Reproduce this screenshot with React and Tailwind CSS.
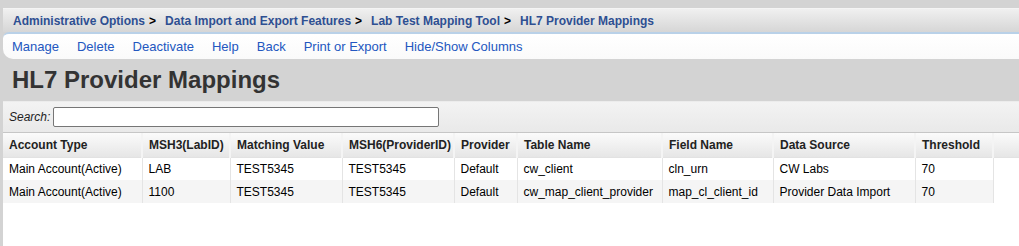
import React from 'react';

const crumbs = [
    'Administrative Options',
    'Data Import and Export Features',
    'Lab Test Mapping Tool',
    'HL7 Provider Mappings',
];

const menu = ['Manage', 'Delete', 'Deactivate', 'Help', 'Back', 'Print or Export', 'Hide/Show Columns'];

const columns = [
    { label: 'Account Type', width: 'w-[139px]' },
    { label: 'MSH3(LabID)', width: 'w-[88px]' },
    { label: 'Matching Value', width: 'w-[112px]' },
    { label: 'MSH6(ProviderID)', width: 'w-[112px]' },
    { label: 'Provider', width: 'w-[63px]' },
    { label: 'Table Name', width: 'w-[145px]' },
    { label: 'Field Name', width: 'w-[111px]' },
    { label: 'Data Source', width: 'w-[142px]' },
    { label: 'Threshold', width: 'w-[78px]' },
];

const rows = [
    ['Main Account(Active)', 'LAB', 'TEST5345', 'TEST5345', 'Default', 'cw_client', 'cln_urn', 'CW Labs', '70'],
    ['Main Account(Active)', '1100', 'TEST5345', 'TEST5345', 'Default', 'cw_map_client_provider', 'map_cl_client_id', 'Provider Data Import', '70'],
];

const App = () => {
    return (
        <div className="min-h-[246px] bg-[#d3d3d3] pl-[3px] pt-[8px] font-['Liberation_Sans',Arial,sans-serif]">
            {/* breadcrumb */}
            <div className="flex h-[24px] items-center border-t border-[#f4f4f4] bg-gradient-to-b from-[#f0f0f0] to-[#d6d6d6] pl-[10px] text-[12px] font-bold text-[#2e4f92]">
                {crumbs.map((c, i) => (
                    <span key={c} className="flex items-center">
                        <span>{c}</span>
                        {i < crumbs.length - 1 && <span className="ml-[4px] mr-[9px] text-black">&gt;</span>}
                    </span>
                ))}
            </div>

            {/* action menu */}
            <div className="flex h-[27px] items-center gap-[18px] rounded-bl-[10px] rounded-tl-[6px] border-t-2 border-[#b9d1e8] bg-gradient-to-b from-white to-[#fafafa] pl-[9px] text-[13px] text-[#2357c0]">
                {menu.map((m) => (
                    <span key={m} className="cursor-pointer">{m}</span>
                ))}
            </div>

            <h1 className="pl-[9px] text-[24px] font-bold leading-[42px] text-[#333333]">HL7 Provider Mappings</h1>

            {/* search panel */}
            <div className="flex h-[32px] items-center border-t border-[#ececec] border-b border-b-[#c6c6c6] bg-gradient-to-b from-[#f3f3f3] to-[#e9e9e9] pl-[6px]">
                <span className="text-[12px] italic text-[#222]">Search:</span>
                <input className="ml-[3px] h-[20px] w-[386px] rounded-[2px] border border-[#767676] bg-white" />
            </div>

            {/* table */}
            <div className="min-h-[113px] bg-white">
                <table className="w-full table-fixed border-collapse text-[12px]">
                    <colgroup>
                        {columns.map((c) => (
                            <col key={c.label} className={c.width} />
                        ))}
                        <col />
                    </colgroup>
                    <thead>
                        <tr className="h-[24px]">
                            {columns.map((c, i) => (
                                <th
                                    key={c.label}
                                    className={
                                        'bg-gradient-to-b from-[#fbfbfb] to-[#e6e6e6] pl-[6px] text-left font-bold text-[#222] whitespace-nowrap border-b border-[#e2e2e2] ' +
                                        (i > 0 ? 'border-l-2 border-l-[#f4f4f4]' : '')
                                    }
                                >
                                    {c.label}
                                </th>
                            ))}
                            <th className="border-b border-l-2 border-[#e2e2e2] border-l-[#f4f4f4] bg-gradient-to-b from-[#fbfbfb] to-[#e6e6e6]"></th>
                        </tr>
                    </thead>
                    <tbody>
                        {rows.map((r, ri) => (
                            <tr key={ri} className="h-[23px]">
                                {r.map((v, i) => (
                                    <td
                                        key={i}
                                        className={
                                            'pl-[6px] whitespace-nowrap text-black ' +
                                            (ri % 2 === 1 ? 'bg-[#f5f5f5] ' : 'bg-white ') +
                                            (i > 0 ? 'border-l border-[#e4e4e4]' : '')
                                        }
                                    >
                                        {v}
                                    </td>
                                ))}
                                <td className="border-l border-[#e4e4e4]"></td>
                            </tr>
                        ))}
                    </tbody>
                </table>
            </div>
        </div>
    );
};

export default App;
